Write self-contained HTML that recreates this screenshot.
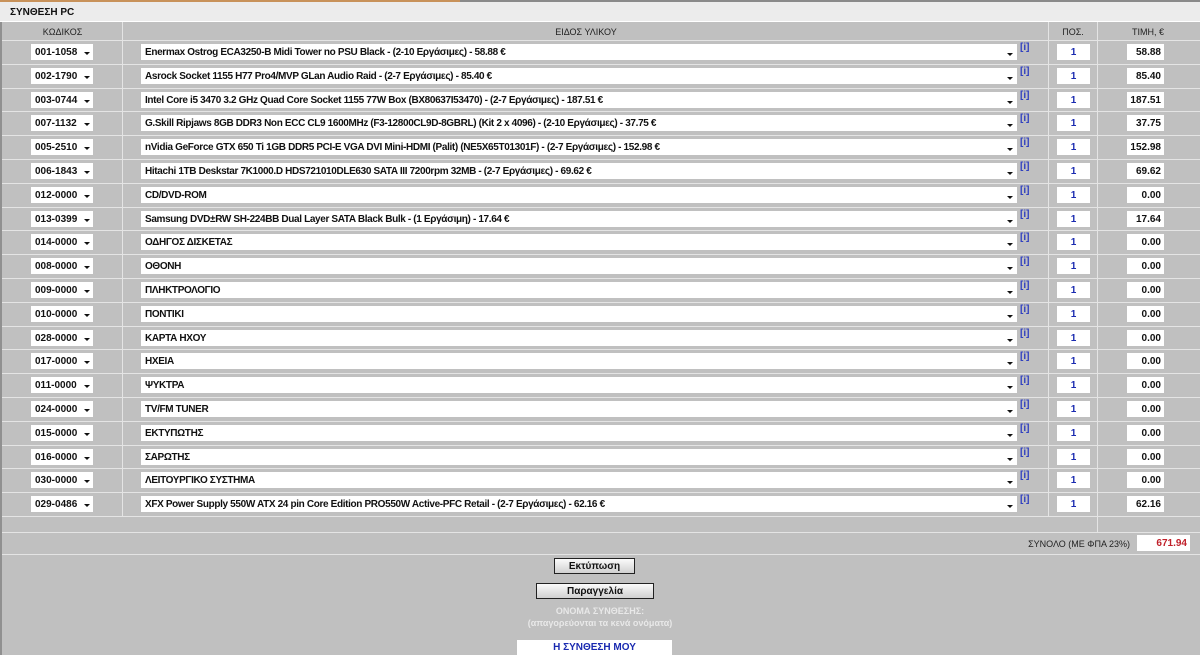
<!DOCTYPE html>
<html><head><meta charset="utf-8"><style>
*{margin:0;padding:0;box-sizing:border-box}
body{width:1200px;height:655px;overflow:hidden;background:#c0c0c0;font-family:"Liberation Sans","DejaVu Sans",sans-serif;position:relative}
.top{position:absolute;left:0;top:0;width:1200px;height:2px;background:#8a8a8a}
.top i{position:absolute;left:0;top:0;width:460px;height:2px;background:#c8925a}
.hdr{position:absolute;left:0;top:2px;width:1200px;height:20px;background:#ececec;border-bottom:1px solid #fff;font-size:10px;font-weight:bold;padding:5px 0 0 10px;color:#111}
.lb{position:absolute;left:0;top:22px;width:2px;height:633px;background:#909090}
.ch{position:absolute;top:22px;height:18px;font-size:9px;color:#222;text-align:center;padding-top:5px}
.vl{position:absolute;width:1px;background:#e4e4e4}
.hl{position:absolute;left:2px;width:1198px;height:1px;background:#e4e4e4}
.row{position:absolute;left:0;width:1200px;height:24px}
.code{position:absolute;left:31px;top:4px;width:62px;height:16px;background:#fff;font-size:10px;font-weight:bold;padding:3px 0 0 4px;color:#111}
.code:after,.desc:after{content:"";position:absolute;right:3px;top:8px;border-left:3px solid transparent;border-right:3px solid transparent;border-top:3px solid #111}
.desc{position:absolute;left:141px;top:4px;width:876px;height:16px;background:#fff;font-size:10px;font-weight:bold;padding:3px 0 0 4px;color:#111;letter-spacing:-0.35px;white-space:nowrap;overflow:hidden}
.desc:after{right:4px;top:9px}
.inf{position:absolute;left:1020px;top:2px;font-size:10px;color:#3040c0;font-weight:bold}
.pos{position:absolute;left:1057px;top:4px;width:33px;height:16px;background:#fff;font-size:10px;font-weight:bold;color:#1a2ab0;text-align:center;padding-top:3px}
.pr{position:absolute;left:1127px;top:4px;width:37px;height:16px;background:#fff;font-size:10px;font-weight:bold;color:#111;text-align:right;padding:3px 3px 0 0}
.btn{position:absolute;height:16px;background:linear-gradient(#fafafa,#d0d0d0);border:1px solid #222;font-size:10px;font-weight:bold;text-align:center;padding-top:2px;color:#111}
.lbl{position:absolute;left:430px;width:340px;text-align:center;font-size:9px;font-weight:bold;color:#e8e8e8}
</style></head><body>
<div class="top"><i></i></div>
<div class="hdr">ΣΥΝΘΕΣΗ PC</div>
<div class="lb"></div>
<div class="ch" style="left:2px;width:121px">ΚΩΔΙΚΟΣ</div>
<div class="ch" style="left:123px;width:926px">ΕΙΔΟΣ ΥΛΙΚΟΥ</div>
<div class="ch" style="left:1049px;width:48px">ΠΟΣ.</div>
<div class="ch" style="left:1098px;width:100px">ΤΙΜΗ, €</div>
<div class="vl" style="left:122px;top:22px;height:494px"></div>
<div class="vl" style="left:1048px;top:22px;height:494px"></div>
<div class="vl" style="left:1097px;top:22px;height:510px"></div>
<div class="hl" style="top:40px"></div>
<div class="hl" style="top:516px"></div>
<div class="hl" style="top:532px"></div>
<div class="hl" style="top:554px"></div>

<div class="row" style="top:40px"><div class="code">001-1058</div><div class="desc">Enermax Ostrog ECA3250-B Midi Tower no PSU Black - (2-10 Εργάσιμες) - 58.88 €</div><div class="inf">[i]</div><div class="pos">1</div><div class="pr">58.88</div></div>
<div class="hl" style="top:63.8px"></div>
<div class="row" style="top:63.8px"><div class="code">002-1790</div><div class="desc">Asrock Socket 1155 H77 Pro4/MVP GLan Audio Raid - (2-7 Εργάσιμες) - 85.40 €</div><div class="inf">[i]</div><div class="pos">1</div><div class="pr">85.40</div></div>
<div class="hl" style="top:87.6px"></div>
<div class="row" style="top:87.6px"><div class="code">003-0744</div><div class="desc">Intel Core i5 3470 3.2 GHz Quad Core Socket 1155 77W Box (BX80637I53470) - (2-7 Εργάσιμες) - 187.51 €</div><div class="inf">[i]</div><div class="pos">1</div><div class="pr">187.51</div></div>
<div class="hl" style="top:111.4px"></div>
<div class="row" style="top:111.4px"><div class="code">007-1132</div><div class="desc">G.Skill Ripjaws 8GB DDR3 Non ECC CL9 1600MHz (F3-12800CL9D-8GBRL) (Kit 2 x 4096) - (2-10 Εργάσιμες) - 37.75 €</div><div class="inf">[i]</div><div class="pos">1</div><div class="pr">37.75</div></div>
<div class="hl" style="top:135.2px"></div>
<div class="row" style="top:135.2px"><div class="code">005-2510</div><div class="desc">nVidia GeForce GTX 650 Ti 1GB DDR5 PCI-E VGA DVI Mini-HDMI (Palit) (NE5X65T01301F) - (2-7 Εργάσιμες) - 152.98 €</div><div class="inf">[i]</div><div class="pos">1</div><div class="pr">152.98</div></div>
<div class="hl" style="top:159px"></div>
<div class="row" style="top:159px"><div class="code">006-1843</div><div class="desc">Hitachi 1TB Deskstar 7K1000.D HDS721010DLE630 SATA III 7200rpm 32MB - (2-7 Εργάσιμες) - 69.62 €</div><div class="inf">[i]</div><div class="pos">1</div><div class="pr">69.62</div></div>
<div class="hl" style="top:182.8px"></div>
<div class="row" style="top:182.8px"><div class="code">012-0000</div><div class="desc">CD/DVD-ROM</div><div class="inf">[i]</div><div class="pos">1</div><div class="pr">0.00</div></div>
<div class="hl" style="top:206.6px"></div>
<div class="row" style="top:206.6px"><div class="code">013-0399</div><div class="desc">Samsung DVD±RW SH-224BB Dual Layer SATA Black Bulk - (1 Εργάσιμη) - 17.64 €</div><div class="inf">[i]</div><div class="pos">1</div><div class="pr">17.64</div></div>
<div class="hl" style="top:230.4px"></div>
<div class="row" style="top:230.4px"><div class="code">014-0000</div><div class="desc">ΟΔΗΓΟΣ ΔΙΣΚΕΤΑΣ</div><div class="inf">[i]</div><div class="pos">1</div><div class="pr">0.00</div></div>
<div class="hl" style="top:254.2px"></div>
<div class="row" style="top:254.2px"><div class="code">008-0000</div><div class="desc">ΟΘΟΝΗ</div><div class="inf">[i]</div><div class="pos">1</div><div class="pr">0.00</div></div>
<div class="hl" style="top:278px"></div>
<div class="row" style="top:278px"><div class="code">009-0000</div><div class="desc">ΠΛΗΚΤΡΟΛΟΓΙΟ</div><div class="inf">[i]</div><div class="pos">1</div><div class="pr">0.00</div></div>
<div class="hl" style="top:301.8px"></div>
<div class="row" style="top:301.8px"><div class="code">010-0000</div><div class="desc">ΠΟΝΤΙΚΙ</div><div class="inf">[i]</div><div class="pos">1</div><div class="pr">0.00</div></div>
<div class="hl" style="top:325.6px"></div>
<div class="row" style="top:325.6px"><div class="code">028-0000</div><div class="desc">ΚΑΡΤΑ ΗΧΟΥ</div><div class="inf">[i]</div><div class="pos">1</div><div class="pr">0.00</div></div>
<div class="hl" style="top:349.4px"></div>
<div class="row" style="top:349.4px"><div class="code">017-0000</div><div class="desc">ΗΧΕΙΑ</div><div class="inf">[i]</div><div class="pos">1</div><div class="pr">0.00</div></div>
<div class="hl" style="top:373.2px"></div>
<div class="row" style="top:373.2px"><div class="code">011-0000</div><div class="desc">ΨΥΚΤΡΑ</div><div class="inf">[i]</div><div class="pos">1</div><div class="pr">0.00</div></div>
<div class="hl" style="top:397px"></div>
<div class="row" style="top:397px"><div class="code">024-0000</div><div class="desc">TV/FM TUNER</div><div class="inf">[i]</div><div class="pos">1</div><div class="pr">0.00</div></div>
<div class="hl" style="top:420.8px"></div>
<div class="row" style="top:420.8px"><div class="code">015-0000</div><div class="desc">ΕΚΤΥΠΩΤΗΣ</div><div class="inf">[i]</div><div class="pos">1</div><div class="pr">0.00</div></div>
<div class="hl" style="top:444.6px"></div>
<div class="row" style="top:444.6px"><div class="code">016-0000</div><div class="desc">ΣΑΡΩΤΗΣ</div><div class="inf">[i]</div><div class="pos">1</div><div class="pr">0.00</div></div>
<div class="hl" style="top:468.4px"></div>
<div class="row" style="top:468.4px"><div class="code">030-0000</div><div class="desc">ΛΕΙΤΟΥΡΓΙΚΟ ΣΥΣΤΗΜΑ</div><div class="inf">[i]</div><div class="pos">1</div><div class="pr">0.00</div></div>
<div class="hl" style="top:492.2px"></div>
<div class="row" style="top:492.2px"><div class="code">029-0486</div><div class="desc">XFX Power Supply 550W ATX 24 pin Core Edition PRO550W Active-PFC Retail - (2-7 Εργάσιμες) - 62.16 €</div><div class="inf">[i]</div><div class="pos">1</div><div class="pr">62.16</div></div>

<div style="position:absolute;left:960px;top:539px;width:170px;text-align:right;font-size:9px;color:#222">ΣΥΝΟΛΟ (ΜΕ ΦΠΑ 23%)</div>
<div style="position:absolute;left:1137px;top:535px;width:53px;height:16px;background:#fff;font-size:10px;font-weight:bold;color:#c0202a;text-align:right;padding:3px 3px 0 0">671.94</div>

<div class="btn" style="left:554px;top:558px;width:81px">Εκτύπωση</div>
<div class="btn" style="left:536px;top:583px;width:118px">Παραγγελία</div>
<div class="lbl" style="top:606px">ΟΝΟΜΑ ΣΥΝΘΕΣΗΣ:</div>
<div class="lbl" style="top:618px">(απαγορεύονται τα κενά ονόματα)</div>
<div style="position:absolute;left:517px;top:640px;width:155px;height:15px;background:#fff;font-size:10px;font-weight:bold;color:#1a2ab0;text-align:center;padding-top:2px">Η ΣΥΝΘΕΣΗ ΜΟΥ</div>
</body></html>
